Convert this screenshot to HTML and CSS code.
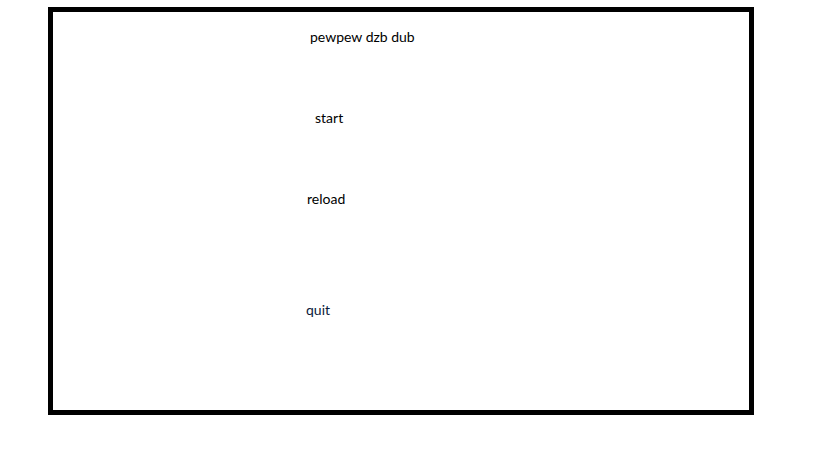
FILE: index.html
```html
<!DOCTYPE html>
<html>
<head>
<meta charset="utf-8">
<link rel="stylesheet" href="styles.css">
</head>
<body>
<div class="frame">
  <div class="title">pewpew dzb dub</div>
  <div class="item start">start</div>
  <div class="item reload">reload</div>
  <div class="item quit">quit</div>
</div>
</body>
</html>
```
FILE: styles.css
```css
html, body {
  margin: 0;
  padding: 0;
  background: #fff;
}
body {
  font-family: Lato, "Open Sans", sans-serif;
  font-size: 14px;
  line-height: 18px;
  color: #000;
}
.frame {
  box-sizing: border-box;
  width: 706px;
  height: 408px;
  margin: 7px 0 0 48px;
  border: 5px solid #000;
  display: flex;
  flex-direction: column;
  align-items: flex-start;
  padding: 16px 0 0 253px;
}
.title {
  margin-left: 4px;
}
.start {
  margin-top: 63px;
  margin-left: 9px;
}
.reload {
  margin-top: 63px;
  margin-left: 1px;
}
.quit {
  margin-top: 93px;
  margin-left: 0;
  color: #0a1a3a;
}
```
